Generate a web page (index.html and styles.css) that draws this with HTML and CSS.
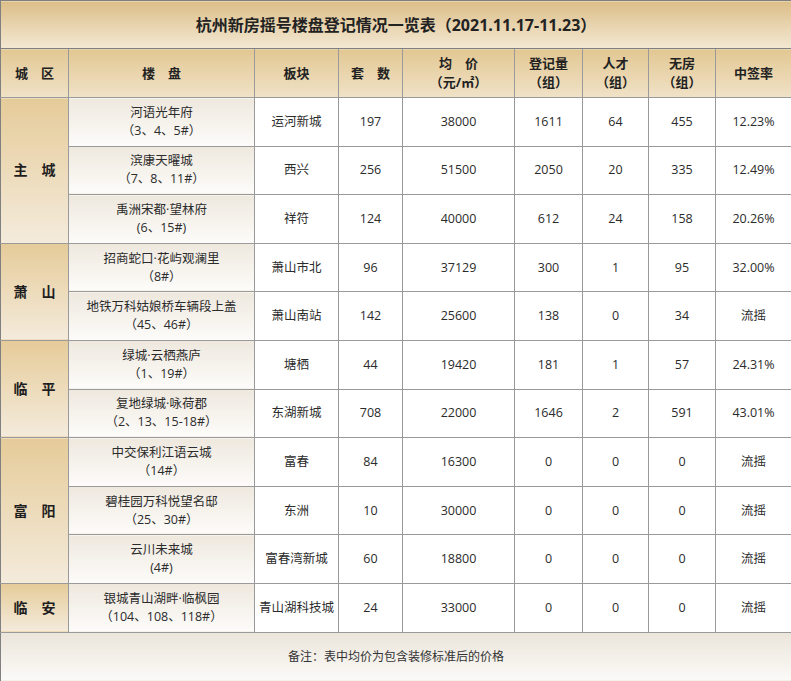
FILE: index.html
```html
<!DOCTYPE html>
<html lang="zh-CN">
<head>
<meta charset="utf-8">
<title>杭州新房摇号楼盘登记情况一览表</title>
<link rel="stylesheet" href="styles.css">
</head>
<body>
<table class="sheet">
  <colgroup>
    <col class="c-area"><col class="c-name"><col class="c-block"><col class="c-sets"><col class="c-price"><col class="c-reg"><col class="c-talent"><col class="c-nohouse"><col class="c-rate">
  </colgroup>
  <thead>
    <tr class="title-row"><th colspan="9" class="title">杭州新房摇号楼盘登记情况一览表（2021.11.17-11.23）</th></tr>
    <tr class="head-row">
      <th>城　区</th>
      <th>楼　盘</th>
      <th>板块</th>
      <th>套　数</th>
      <th>均　价<br>（元/㎡）</th>
      <th>登记量<br>（组）</th>
      <th>人才<br>（组）</th>
      <th>无房<br>（组）</th>
      <th>中签率</th>
    </tr>
  </thead>
  <tbody>
    <tr>
      <td rowspan="3" class="area">主　城</td>
      <td class="name">河语光年府<br>（3、4、5#）</td>
      <td>运河新城</td><td>197</td><td>38000</td><td>1611</td><td>64</td><td>455</td><td>12.23%</td>
    </tr>
    <tr>
      <td class="name">滨康天曜城<br>（7、8、11#）</td>
      <td>西兴</td><td>256</td><td>51500</td><td>2050</td><td>20</td><td>335</td><td>12.49%</td>
    </tr>
    <tr>
      <td class="name">禹洲宋都·望林府<br>(6、15#)</td>
      <td>祥符</td><td>124</td><td>40000</td><td>612</td><td>24</td><td>158</td><td>20.26%</td>
    </tr>
    <tr>
      <td rowspan="2" class="area">萧　山</td>
      <td class="name">招商蛇口·花屿观澜里<br>（8#）</td>
      <td>萧山市北</td><td>96</td><td>37129</td><td>300</td><td>1</td><td>95</td><td>32.00%</td>
    </tr>
    <tr>
      <td class="name">地铁万科姑娘桥车辆段上盖<br>（45、46#）</td>
      <td>萧山南站</td><td>142</td><td>25600</td><td>138</td><td>0</td><td>34</td><td>流摇</td>
    </tr>
    <tr>
      <td rowspan="2" class="area">临　平</td>
      <td class="name">绿城·云栖燕庐<br>（1、19#）</td>
      <td>塘栖</td><td>44</td><td>19420</td><td>181</td><td>1</td><td>57</td><td>24.31%</td>
    </tr>
    <tr>
      <td class="name">复地绿城·咏荷郡<br>（2、13、15-18#）</td>
      <td>东湖新城</td><td>708</td><td>22000</td><td>1646</td><td>2</td><td>591</td><td>43.01%</td>
    </tr>
    <tr>
      <td rowspan="3" class="area">富　阳</td>
      <td class="name">中交保利江语云城<br>（14#）</td>
      <td>富春</td><td>84</td><td>16300</td><td>0</td><td>0</td><td>0</td><td>流摇</td>
    </tr>
    <tr>
      <td class="name">碧桂园万科悦望名邸<br>（25、30#）</td>
      <td>东洲</td><td>10</td><td>30000</td><td>0</td><td>0</td><td>0</td><td>流摇</td>
    </tr>
    <tr>
      <td class="name">云川未来城<br>(4#)</td>
      <td>富春湾新城</td><td>60</td><td>18800</td><td>0</td><td>0</td><td>0</td><td>流摇</td>
    </tr>
    <tr>
      <td class="area">临　安</td>
      <td class="name">银城青山湖畔·临枫园<br>（104、108、118#）</td>
      <td>青山湖科技城</td><td>24</td><td>33000</td><td>0</td><td>0</td><td>0</td><td>流摇</td>
    </tr>
  </tbody>
  <tfoot>
    <tr class="foot-row"><td colspan="9" class="note">备注：表中均价为包含装修标准后的价格</td></tr>
  </tfoot>
</table>
</body>
</html>
```

FILE: styles.css
```css
html, body {
  margin: 0;
  padding: 0;
  background: #ffffff;
}

.sheet {
  width: 791px;
  height: 681px;
  table-layout: fixed;
  border-collapse: collapse;
  font-family: "Open Sans", "Noto Sans CJK SC", sans-serif;
  color: #2b2b2b;
  font-size: 12.5px;
  line-height: 18px;
  text-align: center;
}

.c-area { width: 68px; }
.c-name { width: 186px; }
.c-block { width: 84px; }
.c-sets { width: 64px; }
.c-price { width: 112px; }
.c-reg { width: 68px; }
.c-talent { width: 66px; }
.c-nohouse { width: 67px; }
.c-rate { width: 76px; }

.sheet th,
.sheet td {
  border: 1px solid #9a9a9a;
  padding: 0;
  vertical-align: middle;
  overflow: hidden;
}

.title-row { height: 48px; }
.title {
  background: linear-gradient(#dcbe88, #f3e8d3);
  font-size: 16px;
  font-weight: 700;
  color: #222;
  border-color: #808080 !important;
}

.head-row { height: 49px; }
.head-row th {
  background: linear-gradient(#e2c792, #f0e2c7);
  font-size: 13px;
  font-weight: 700;
  color: #222;
  line-height: 19px;
}

.sheet tbody tr { height: 48.6px; }

.area {
  background: linear-gradient(#e5cb99, #f4ebdc);
  font-size: 14px;
  font-weight: 700;
  color: #1e1e1e;
}

.name {
  background: linear-gradient(#eee8de, #fdfcfa);
}

.foot-row { height: 49px; }
.note {
  background: linear-gradient(#ebe5da, #fbfaf8);
  font-size: 12px;
  color: #333;
  border-color: #808080 !important;
}

.sheet tr > :first-child { border-left-color: #808080; }
.sheet tr > :last-child { border-right-color: #808080; }
```
